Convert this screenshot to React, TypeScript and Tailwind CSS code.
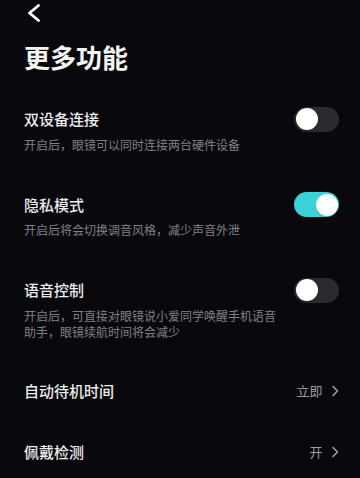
import { useState } from "react";

type ToggleItem = { key: string; title: string; desc: string; on: boolean };

const TOGGLES: ToggleItem[] = [
  { key: "dual", title: "双设备连接", desc: "开启后，眼镜可以同时连接两台硬件设备", on: false },
  { key: "privacy", title: "隐私模式", desc: "开启后将会切换调音风格，减少声音外泄", on: true },
  { key: "voice", title: "语音控制", desc: "开启后，可直接对眼镜说小爱同学唤醒手机语音助手，眼镜续航时间将会减少", on: false },
];

const LINKS = [
  { key: "standby", title: "自动待机时间", value: "立即" },
  { key: "wear", title: "佩戴检测", value: "开" },
];

function Toggle({ on, onClick }: { on: boolean; onClick: () => void }) {
  return (
    <button
      onClick={onClick}
      className={`relative w-[45px] h-[25px] rounded-full shrink-0 ${on ? "bg-[#3dd2da]" : "bg-[#2b2b2f]"}`}
    >
      <span
        className={`absolute top-[1.5px] w-[22px] h-[22px] rounded-full bg-white shadow-sm ${on ? "right-[1.5px]" : "left-[1.5px]"}`}
      />
    </button>
  );
}

export default function App() {
  const [state, setState] = useState<Record<string, boolean>>(
    Object.fromEntries(TOGGLES.map((t) => [t.key, t.on]))
  );

  return (
    <div className="w-[360px] h-[478px] overflow-hidden bg-[#09090d] text-white font-['Noto_Sans_CJK_SC','Noto_Sans',sans-serif]">
      {/* Back */}
      <div className="pl-[25px] pt-[1.5px]">
        <svg width="16" height="22" viewBox="0 0 16 22" className="block">
          <path
            d="M13.5 3.5 L4.5 11 L13.5 18.5"
            fill="none"
            stroke="#ffffff"
            strokeWidth="2.8"
            strokeLinecap="round"
            strokeLinejoin="round"
          />
        </svg>
      </div>

      <h1 className="mt-[16.5px] pl-[24px] text-[26px] leading-[34px] font-bold text-[#f4f4f4]">更多功能</h1>

      <div className="mt-[14px] flex flex-col">
        {TOGGLES.map((t) => (
          <div key={t.key} className="pl-[24px] pr-[21px] py-[21px]">
            <div className="flex items-center justify-between h-[20px]">
              <p className="text-[15px] leading-[20px] font-medium text-[#ececec]">{t.title}</p>
              <Toggle on={state[t.key]} onClick={() => setState((s) => ({ ...s, [t.key]: !s[t.key] }))} />
            </div>
            <p className="mt-[7.5px] max-w-[256px] text-[12px] leading-[16px] text-[#808084]">{t.desc}</p>
          </div>
        ))}

        {LINKS.map((l) => (
          <div key={l.key} className="pl-[24px] pr-[21.5px] py-[20.5px] flex items-center justify-between">
            <p className="text-[15px] leading-[20px] font-medium text-[#ececec]">{l.title}</p>
            <div className="flex items-center">
              <span className="text-[13px] leading-[20px] text-[#9c9ca0]">{l.value}</span>
              <svg width="8" height="12" viewBox="0 0 8 12" className="ml-[8px] block">
                <path
                  d="M2 1.5 L6.5 6 L2 10.5"
                  fill="none"
                  stroke="#9c9ca0"
                  strokeWidth="1.6"
                  strokeLinecap="round"
                  strokeLinejoin="round"
                />
              </svg>
            </div>
          </div>
        ))}
      </div>
    </div>
  );
}
